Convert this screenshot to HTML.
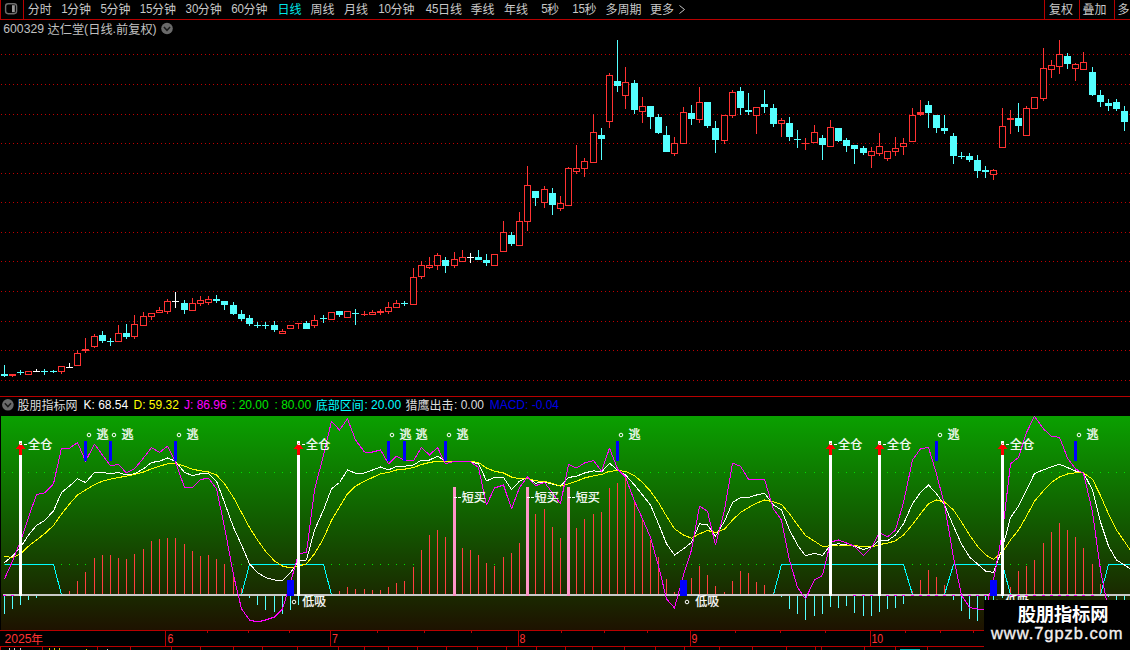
<!DOCTYPE html>
<html><head><meta charset="utf-8"><title>chart</title>
<style>html,body{margin:0;padding:0;background:#000}body{width:1130px;height:650px;overflow:hidden;position:relative}
svg{position:absolute;left:0;top:0;display:block}text{font-family:"Liberation Sans","Noto Sans CJK SC",sans-serif}</style></head>
<body><svg width="1130" height="650" viewBox="0 0 1130 650"><rect width="1130" height="650" fill="#000"/><g shape-rendering="crispEdges" stroke="#b80000" stroke-width="1" fill="none"><line x1="0" y1="19.5" x2="1130" y2="19.5"/><line x1="0.5" y1="0" x2="0.5" y2="20"/><line x1="23.5" y1="0" x2="23.5" y2="20"/><line x1="1044.5" y1="0" x2="1044.5" y2="20"/><line x1="1079.5" y1="0" x2="1079.5" y2="20"/><line x1="1114.5" y1="0" x2="1114.5" y2="20"/></g><rect x="5.6" y="3.7" width="11" height="10" rx="2.6" fill="none" stroke="#6e6e6e" stroke-width="1.4"/><rect x="12" y="5.2" width="2.8" height="7" fill="#9a9a9a"/><text x="27.80" y="14" font-size="12" fill="#c8c8c8">分时</text><text transform="translate(61.30 13.10) scale(0.96 1)" font-size="12" fill="#c8c8c8" xml:space="preserve">1</text><text x="67.11" y="14" font-size="12" fill="#c8c8c8">分钟</text><text transform="translate(100.60 13.10) scale(0.96 1)" font-size="12" fill="#c8c8c8" xml:space="preserve">5</text><text x="106.41" y="14" font-size="12" fill="#c8c8c8">分钟</text><text transform="translate(139.70 13.10) scale(0.96 1)" font-size="12" fill="#c8c8c8" xml:space="preserve">15</text><text x="151.91" y="14" font-size="12" fill="#c8c8c8">分钟</text><text transform="translate(185.50 13.10) scale(0.96 1)" font-size="12" fill="#c8c8c8" xml:space="preserve">30</text><text x="197.71" y="14" font-size="12" fill="#c8c8c8">分钟</text><text transform="translate(231.20 13.10) scale(0.96 1)" font-size="12" fill="#c8c8c8" xml:space="preserve">60</text><text x="243.41" y="14" font-size="12" fill="#c8c8c8">分钟</text><text x="277.60" y="14" font-size="12" fill="#00e6e6">日线</text><text x="310.60" y="14" font-size="12" fill="#c8c8c8">周线</text><text x="344.10" y="14" font-size="12" fill="#c8c8c8">月线</text><text transform="translate(378.20 13.10) scale(0.96 1)" font-size="12" fill="#c8c8c8" xml:space="preserve">10</text><text x="390.41" y="14" font-size="12" fill="#c8c8c8">分钟</text><text transform="translate(425.70 13.10) scale(0.96 1)" font-size="12" fill="#c8c8c8" xml:space="preserve">45</text><text x="437.91" y="14" font-size="12" fill="#c8c8c8">日线</text><text x="470.60" y="14" font-size="12" fill="#c8c8c8">季线</text><text x="504.10" y="14" font-size="12" fill="#c8c8c8">年线</text><text transform="translate(541.20 13.10) scale(0.96 1)" font-size="12" fill="#c8c8c8" xml:space="preserve">5</text><text x="547.01" y="14" font-size="12" fill="#c8c8c8">秒</text><text transform="translate(572.20 13.10) scale(0.96 1)" font-size="12" fill="#c8c8c8" xml:space="preserve">15</text><text x="584.41" y="14" font-size="12" fill="#c8c8c8">秒</text><text x="605.60" y="14" font-size="12" fill="#c8c8c8">多周期</text><text x="650.10" y="14" font-size="12" fill="#c8c8c8">更多</text><text x="1049.10" y="14" font-size="12" fill="#c8c8c8">复权</text><text x="1082.60" y="14" font-size="12" fill="#c8c8c8">叠加</text><text x="1117.60" y="14" font-size="12" fill="#c8c8c8">多</text><path d="M679.5 5.5 L684.5 9.5 L679.5 13.5" stroke="#c8c8c8" fill="none" stroke-width="1"/><text x="3.30" y="32.90" font-size="12.2" fill="#c0c0c0" xml:space="preserve">600329 </text><text x="47.60" y="33.9" font-size="12.2" fill="#c0c0c0">达仁堂</text><text x="84.00" y="32.90" font-size="12.2" fill="#c0c0c0" xml:space="preserve">(</text><text x="88.26" y="33.9" font-size="12.2" fill="#c0c0c0">日线</text><text x="112.46" y="32.90" font-size="12.2" fill="#c0c0c0" xml:space="preserve">.</text><text x="116.05" y="33.9" font-size="12.2" fill="#c0c0c0">前复权</text><text x="152.45" y="32.90" font-size="12.2" fill="#c0c0c0" xml:space="preserve">)</text><circle cx="167" cy="28.5" r="5.8" fill="#6a6a6a"/><path d="M163.9 27 L167 30.3 L170.1 27" stroke="#1a1a1a" stroke-width="1.5" fill="none"/><g shape-rendering="crispEdges" stroke="#c00000" stroke-width="1" stroke-dasharray="1 3"><line x1="1" y1="54.5" x2="1130" y2="54.5"/><line x1="1" y1="84.5" x2="1130" y2="84.5"/><line x1="1" y1="114.5" x2="1130" y2="114.5"/><line x1="1" y1="143.5" x2="1130" y2="143.5"/><line x1="1" y1="173.5" x2="1130" y2="173.5"/><line x1="1" y1="202.5" x2="1130" y2="202.5"/><line x1="1" y1="232.5" x2="1130" y2="232.5"/><line x1="1" y1="261.5" x2="1130" y2="261.5"/><line x1="1" y1="291.5" x2="1130" y2="291.5"/><line x1="1" y1="321.5" x2="1130" y2="321.5"/><line x1="1" y1="350.5" x2="1130" y2="350.5"/><line x1="1" y1="380.5" x2="1130" y2="380.5"/></g><g shape-rendering="crispEdges"><rect x="4" y="365" width="1" height="12" fill="#54ffff"/><rect x="1" y="374" width="7" height="2" fill="#54ffff"/><rect x="12" y="374" width="1" height="3" fill="#ff3232"/><rect x="9" y="374" width="7" height="2" fill="#ff3232"/><rect x="20" y="370" width="1" height="5" fill="#54ffff"/><rect x="17" y="372" width="7" height="1" fill="#54ffff"/><rect x="25.5" y="371.5" width="6" height="3" fill="#000" stroke="#ff3232" stroke-width="1"/><rect x="36" y="369" width="1" height="3" fill="#ffffff"/><rect x="33" y="371" width="7" height="1" fill="#ffffff"/><rect x="44" y="369" width="1" height="6" fill="#54ffff"/><rect x="41" y="371" width="7" height="1" fill="#54ffff"/><rect x="53" y="370" width="1" height="3" fill="#54ffff"/><rect x="50" y="371" width="7" height="1" fill="#54ffff"/><rect x="61" y="372" width="1" height="2" fill="#ff3232"/><rect x="58.5" y="366.5" width="6" height="5" fill="#000" stroke="#ff3232" stroke-width="1"/><rect x="69" y="363" width="1" height="5" fill="#ffffff"/><rect x="66" y="367" width="7" height="1" fill="#ffffff"/><rect x="77" y="350" width="1" height="3" fill="#ff3232"/><rect x="74.5" y="353.5" width="6" height="12" fill="#000" stroke="#ff3232" stroke-width="1"/><rect x="85" y="338" width="1" height="15" fill="#ff3232"/><rect x="82" y="349" width="7" height="2" fill="#ff3232"/><rect x="94" y="334" width="1" height="2" fill="#ff3232"/><rect x="94" y="347" width="1" height="1" fill="#ff3232"/><rect x="91.5" y="336.5" width="6" height="10" fill="#000" stroke="#ff3232" stroke-width="1"/><rect x="102" y="331" width="1" height="12" fill="#54ffff"/><rect x="99" y="335" width="7" height="6" fill="#54ffff"/><rect x="110" y="338" width="1" height="8" fill="#54ffff"/><rect x="107" y="341" width="7" height="1" fill="#54ffff"/><rect x="118" y="325" width="1" height="8" fill="#ff3232"/><rect x="115.5" y="333.5" width="6" height="8" fill="#000" stroke="#ff3232" stroke-width="1"/><rect x="126" y="324" width="1" height="15" fill="#54ffff"/><rect x="123" y="333" width="7" height="4" fill="#54ffff"/><rect x="134" y="315" width="1" height="9" fill="#ff3232"/><rect x="134" y="337" width="1" height="2" fill="#ff3232"/><rect x="131.5" y="324.5" width="6" height="12" fill="#000" stroke="#ff3232" stroke-width="1"/><rect x="143" y="312" width="1" height="4" fill="#ff3232"/><rect x="140.5" y="316.5" width="6" height="9" fill="#000" stroke="#ff3232" stroke-width="1"/><rect x="151" y="317" width="1" height="3" fill="#ff3232"/><rect x="148.5" y="313.5" width="6" height="3" fill="#000" stroke="#ff3232" stroke-width="1"/><rect x="159" y="307" width="1" height="3" fill="#ff3232"/><rect x="156.5" y="310.5" width="6" height="2" fill="#000" stroke="#ff3232" stroke-width="1"/><rect x="167" y="299" width="1" height="2" fill="#ff3232"/><rect x="167" y="312" width="1" height="2" fill="#ff3232"/><rect x="164.5" y="301.5" width="6" height="10" fill="#000" stroke="#ff3232" stroke-width="1"/><rect x="175" y="292" width="1" height="16" fill="#ffffff"/><rect x="172" y="301" width="7" height="1" fill="#ffffff"/><rect x="184" y="300" width="1" height="14" fill="#54ffff"/><rect x="181" y="303" width="7" height="7" fill="#54ffff"/><rect x="192" y="298" width="1" height="5" fill="#ff3232"/><rect x="189.5" y="303.5" width="6" height="7" fill="#000" stroke="#ff3232" stroke-width="1"/><rect x="200" y="296" width="1" height="4" fill="#ff3232"/><rect x="200" y="304" width="1" height="2" fill="#ff3232"/><rect x="197.5" y="300.5" width="6" height="3" fill="#000" stroke="#ff3232" stroke-width="1"/><rect x="208" y="296" width="1" height="3" fill="#ff3232"/><rect x="208" y="303" width="1" height="2" fill="#ff3232"/><rect x="205.5" y="299.5" width="6" height="3" fill="#000" stroke="#ff3232" stroke-width="1"/><rect x="216" y="295" width="1" height="8" fill="#54ffff"/><rect x="213" y="299" width="7" height="2" fill="#54ffff"/><rect x="224" y="301" width="1" height="9" fill="#54ffff"/><rect x="221" y="301" width="7" height="4" fill="#54ffff"/><rect x="233" y="302" width="1" height="13" fill="#54ffff"/><rect x="230" y="305" width="7" height="9" fill="#54ffff"/><rect x="241" y="310" width="1" height="11" fill="#54ffff"/><rect x="238" y="314" width="7" height="5" fill="#54ffff"/><rect x="249" y="315" width="1" height="11" fill="#54ffff"/><rect x="246" y="318" width="7" height="6" fill="#54ffff"/><rect x="257" y="322" width="1" height="6" fill="#54ffff"/><rect x="254" y="325" width="7" height="1" fill="#54ffff"/><rect x="265" y="322" width="1" height="7" fill="#54ffff"/><rect x="262" y="325" width="7" height="1" fill="#54ffff"/><rect x="274" y="321" width="1" height="11" fill="#54ffff"/><rect x="271" y="325" width="7" height="5" fill="#54ffff"/><rect x="282" y="329" width="1" height="2" fill="#ff3232"/><rect x="279.5" y="331.5" width="6" height="2" fill="#000" stroke="#ff3232" stroke-width="1"/><rect x="287.5" y="325.5" width="6" height="3" fill="#000" stroke="#ff3232" stroke-width="1"/><rect x="298" y="323" width="1" height="6" fill="#ff3232"/><rect x="295" y="323" width="7" height="1" fill="#ff3232"/><rect x="306" y="321" width="1" height="8" fill="#54ffff"/><rect x="303" y="323" width="7" height="6" fill="#54ffff"/><rect x="314" y="315" width="1" height="5" fill="#ff3232"/><rect x="314" y="326" width="1" height="2" fill="#ff3232"/><rect x="311.5" y="320.5" width="6" height="5" fill="#000" stroke="#ff3232" stroke-width="1"/><rect x="323" y="315" width="1" height="8" fill="#54ffff"/><rect x="320" y="318" width="7" height="1" fill="#54ffff"/><rect x="328.5" y="312.5" width="6" height="7" fill="#000" stroke="#ff3232" stroke-width="1"/><rect x="339" y="311" width="1" height="6" fill="#54ffff"/><rect x="336" y="311" width="7" height="4" fill="#54ffff"/><rect x="344.5" y="311.5" width="6" height="6" fill="#000" stroke="#ff3232" stroke-width="1"/><rect x="355" y="309" width="1" height="16" fill="#54ffff"/><rect x="352" y="313" width="7" height="1" fill="#54ffff"/><rect x="364" y="311" width="1" height="5" fill="#ff3232"/><rect x="361" y="314" width="7" height="1" fill="#ff3232"/><rect x="372" y="310" width="1" height="2" fill="#ff3232"/><rect x="369.5" y="312.5" width="6" height="2" fill="#000" stroke="#ff3232" stroke-width="1"/><rect x="380" y="309" width="1" height="6" fill="#ff3232"/><rect x="377" y="311" width="7" height="2" fill="#ff3232"/><rect x="388" y="302" width="1" height="5" fill="#ff3232"/><rect x="388" y="312" width="1" height="2" fill="#ff3232"/><rect x="385.5" y="307.5" width="6" height="4" fill="#000" stroke="#ff3232" stroke-width="1"/><rect x="396" y="300" width="1" height="3" fill="#ff3232"/><rect x="393.5" y="303.5" width="6" height="4" fill="#000" stroke="#ff3232" stroke-width="1"/><rect x="404" y="301" width="1" height="5" fill="#54ffff"/><rect x="401" y="303" width="7" height="1" fill="#54ffff"/><rect x="413" y="268" width="1" height="9" fill="#ff3232"/><rect x="410.5" y="277.5" width="6" height="27" fill="#000" stroke="#ff3232" stroke-width="1"/><rect x="421" y="261" width="1" height="4" fill="#ff3232"/><rect x="421" y="277" width="1" height="2" fill="#ff3232"/><rect x="418.5" y="265.5" width="6" height="11" fill="#000" stroke="#ff3232" stroke-width="1"/><rect x="429" y="257" width="1" height="8" fill="#ff3232"/><rect x="429" y="268" width="1" height="1" fill="#ff3232"/><rect x="426.5" y="265.5" width="6" height="2" fill="#000" stroke="#ff3232" stroke-width="1"/><rect x="437" y="253" width="1" height="2" fill="#ff3232"/><rect x="437" y="266" width="1" height="4" fill="#ff3232"/><rect x="434.5" y="255.5" width="6" height="10" fill="#000" stroke="#ff3232" stroke-width="1"/><rect x="445" y="257" width="1" height="16" fill="#54ffff"/><rect x="442" y="260" width="7" height="6" fill="#54ffff"/><rect x="454" y="252" width="1" height="7" fill="#ff3232"/><rect x="454" y="266" width="1" height="2" fill="#ff3232"/><rect x="451.5" y="259.5" width="6" height="6" fill="#000" stroke="#ff3232" stroke-width="1"/><rect x="462" y="250" width="1" height="7" fill="#ff3232"/><rect x="459.5" y="257.5" width="6" height="4" fill="#000" stroke="#ff3232" stroke-width="1"/><rect x="470" y="253" width="1" height="10" fill="#ffffff"/><rect x="467" y="257" width="7" height="1" fill="#ffffff"/><rect x="478" y="250" width="1" height="10" fill="#54ffff"/><rect x="475" y="257" width="7" height="3" fill="#54ffff"/><rect x="486" y="254" width="1" height="12" fill="#54ffff"/><rect x="483" y="260" width="7" height="3" fill="#54ffff"/><rect x="491.5" y="254.5" width="6" height="11" fill="#000" stroke="#ff3232" stroke-width="1"/><rect x="503" y="221" width="1" height="11" fill="#ff3232"/><rect x="500.5" y="232.5" width="6" height="19" fill="#000" stroke="#ff3232" stroke-width="1"/><rect x="511" y="232" width="1" height="14" fill="#54ffff"/><rect x="508" y="235" width="7" height="9" fill="#54ffff"/><rect x="519" y="212" width="1" height="9" fill="#ff3232"/><rect x="516.5" y="221.5" width="6" height="24" fill="#000" stroke="#ff3232" stroke-width="1"/><rect x="527" y="166" width="1" height="19" fill="#ff3232"/><rect x="527" y="222" width="1" height="9" fill="#ff3232"/><rect x="524.5" y="185.5" width="6" height="36" fill="#000" stroke="#ff3232" stroke-width="1"/><rect x="535" y="191" width="1" height="15" fill="#54ffff"/><rect x="532" y="191" width="7" height="7" fill="#54ffff"/><rect x="544" y="186" width="1" height="3" fill="#ff3232"/><rect x="544" y="203" width="1" height="5" fill="#ff3232"/><rect x="541.5" y="189.5" width="6" height="13" fill="#000" stroke="#ff3232" stroke-width="1"/><rect x="552" y="188" width="1" height="27" fill="#54ffff"/><rect x="549" y="193" width="7" height="12" fill="#54ffff"/><rect x="560" y="196" width="1" height="7" fill="#ff3232"/><rect x="560" y="209" width="1" height="2" fill="#ff3232"/><rect x="557.5" y="203.5" width="6" height="5" fill="#000" stroke="#ff3232" stroke-width="1"/><rect x="568" y="167" width="1" height="1" fill="#ff3232"/><rect x="565.5" y="168.5" width="6" height="37" fill="#000" stroke="#ff3232" stroke-width="1"/><rect x="576" y="145" width="1" height="23" fill="#ff3232"/><rect x="576" y="172" width="1" height="2" fill="#ff3232"/><rect x="573.5" y="168.5" width="6" height="3" fill="#000" stroke="#ff3232" stroke-width="1"/><rect x="584" y="158" width="1" height="3" fill="#ff3232"/><rect x="584" y="169" width="1" height="8" fill="#ff3232"/><rect x="581.5" y="161.5" width="6" height="7" fill="#000" stroke="#ff3232" stroke-width="1"/><rect x="593" y="114" width="1" height="18" fill="#ff3232"/><rect x="590.5" y="132.5" width="6" height="30" fill="#000" stroke="#ff3232" stroke-width="1"/><rect x="601" y="128" width="1" height="32" fill="#54ffff"/><rect x="598" y="135" width="7" height="4" fill="#54ffff"/><rect x="609" y="73" width="1" height="2" fill="#ff3232"/><rect x="609" y="122" width="1" height="6" fill="#ff3232"/><rect x="606.5" y="75.5" width="6" height="46" fill="#000" stroke="#ff3232" stroke-width="1"/><rect x="617" y="40" width="1" height="52" fill="#54ffff"/><rect x="614" y="81" width="7" height="5" fill="#54ffff"/><rect x="625" y="67" width="1" height="15" fill="#ff3232"/><rect x="625" y="96" width="1" height="13" fill="#ff3232"/><rect x="622.5" y="82.5" width="6" height="13" fill="#000" stroke="#ff3232" stroke-width="1"/><rect x="634" y="80" width="1" height="34" fill="#54ffff"/><rect x="631" y="83" width="7" height="27" fill="#54ffff"/><rect x="642" y="97" width="1" height="9" fill="#ff3232"/><rect x="642" y="112" width="1" height="11" fill="#ff3232"/><rect x="639.5" y="106.5" width="6" height="5" fill="#000" stroke="#ff3232" stroke-width="1"/><rect x="650" y="106" width="1" height="23" fill="#54ffff"/><rect x="647" y="106" width="7" height="11" fill="#54ffff"/><rect x="658" y="114" width="1" height="20" fill="#54ffff"/><rect x="655" y="117" width="7" height="16" fill="#54ffff"/><rect x="666" y="126" width="1" height="26" fill="#54ffff"/><rect x="663" y="135" width="7" height="17" fill="#54ffff"/><rect x="674" y="137" width="1" height="6" fill="#ff3232"/><rect x="674" y="154" width="1" height="2" fill="#ff3232"/><rect x="671.5" y="143.5" width="6" height="10" fill="#000" stroke="#ff3232" stroke-width="1"/><rect x="683" y="107" width="1" height="5" fill="#ff3232"/><rect x="680.5" y="112.5" width="6" height="31" fill="#000" stroke="#ff3232" stroke-width="1"/><rect x="691" y="105" width="1" height="20" fill="#54ffff"/><rect x="688" y="113" width="7" height="6" fill="#54ffff"/><rect x="699" y="87" width="1" height="15" fill="#ff3232"/><rect x="699" y="120" width="1" height="3" fill="#ff3232"/><rect x="696.5" y="102.5" width="6" height="17" fill="#000" stroke="#ff3232" stroke-width="1"/><rect x="707" y="102" width="1" height="26" fill="#54ffff"/><rect x="704" y="102" width="7" height="24" fill="#54ffff"/><rect x="715" y="121" width="1" height="32" fill="#54ffff"/><rect x="712" y="128" width="7" height="12" fill="#54ffff"/><rect x="724" y="141" width="1" height="3" fill="#ff3232"/><rect x="721.5" y="115.5" width="6" height="25" fill="#000" stroke="#ff3232" stroke-width="1"/><rect x="732" y="90" width="1" height="2" fill="#ff3232"/><rect x="732" y="116" width="1" height="2" fill="#ff3232"/><rect x="729.5" y="92.5" width="6" height="23" fill="#000" stroke="#ff3232" stroke-width="1"/><rect x="740" y="87" width="1" height="28" fill="#54ffff"/><rect x="737" y="91" width="7" height="17" fill="#54ffff"/><rect x="748" y="93" width="1" height="22" fill="#54ffff"/><rect x="745" y="110" width="7" height="2" fill="#54ffff"/><rect x="756" y="116" width="1" height="18" fill="#ff3232"/><rect x="753.5" y="107.5" width="6" height="8" fill="#000" stroke="#ff3232" stroke-width="1"/><rect x="764" y="90" width="1" height="23" fill="#54ffff"/><rect x="761" y="104" width="7" height="3" fill="#54ffff"/><rect x="773" y="104" width="1" height="23" fill="#54ffff"/><rect x="770" y="108" width="7" height="16" fill="#54ffff"/><rect x="781" y="118" width="1" height="2" fill="#ff3232"/><rect x="781" y="124" width="1" height="13" fill="#ff3232"/><rect x="778.5" y="120.5" width="6" height="3" fill="#000" stroke="#ff3232" stroke-width="1"/><rect x="789" y="117" width="1" height="24" fill="#54ffff"/><rect x="786" y="123" width="7" height="14" fill="#54ffff"/><rect x="797" y="130" width="1" height="18" fill="#54ffff"/><rect x="794" y="139" width="7" height="1" fill="#54ffff"/><rect x="805" y="138" width="1" height="12" fill="#ff3232"/><rect x="802" y="143" width="7" height="1" fill="#ff3232"/><rect x="814" y="125" width="1" height="7" fill="#ff3232"/><rect x="811.5" y="132.5" width="6" height="10" fill="#000" stroke="#ff3232" stroke-width="1"/><rect x="822" y="135" width="1" height="25" fill="#54ffff"/><rect x="819" y="138" width="7" height="7" fill="#54ffff"/><rect x="830" y="120" width="1" height="7" fill="#ff3232"/><rect x="827.5" y="127.5" width="6" height="19" fill="#000" stroke="#ff3232" stroke-width="1"/><rect x="838" y="128" width="1" height="14" fill="#54ffff"/><rect x="835" y="128" width="7" height="13" fill="#54ffff"/><rect x="846" y="138" width="1" height="14" fill="#54ffff"/><rect x="843" y="140" width="7" height="6" fill="#54ffff"/><rect x="854" y="145" width="1" height="19" fill="#54ffff"/><rect x="851" y="145" width="7" height="4" fill="#54ffff"/><rect x="863" y="146" width="1" height="9" fill="#54ffff"/><rect x="860" y="148" width="7" height="5" fill="#54ffff"/><rect x="871" y="147" width="1" height="4" fill="#ff3232"/><rect x="871" y="156" width="1" height="12" fill="#ff3232"/><rect x="868.5" y="151.5" width="6" height="4" fill="#000" stroke="#ff3232" stroke-width="1"/><rect x="879" y="133" width="1" height="13" fill="#ff3232"/><rect x="879" y="154" width="1" height="2" fill="#ff3232"/><rect x="876.5" y="146.5" width="6" height="7" fill="#000" stroke="#ff3232" stroke-width="1"/><rect x="887" y="159" width="1" height="2" fill="#ff3232"/><rect x="884.5" y="151.5" width="6" height="7" fill="#000" stroke="#ff3232" stroke-width="1"/><rect x="895" y="137" width="1" height="11" fill="#ff3232"/><rect x="895" y="152" width="1" height="4" fill="#ff3232"/><rect x="892.5" y="148.5" width="6" height="3" fill="#000" stroke="#ff3232" stroke-width="1"/><rect x="903" y="138" width="1" height="5" fill="#ff3232"/><rect x="903" y="147" width="1" height="8" fill="#ff3232"/><rect x="900.5" y="143.5" width="6" height="3" fill="#000" stroke="#ff3232" stroke-width="1"/><rect x="912" y="108" width="1" height="7" fill="#ff3232"/><rect x="909.5" y="115.5" width="6" height="26" fill="#000" stroke="#ff3232" stroke-width="1"/><rect x="920" y="100" width="1" height="16" fill="#ff3232"/><rect x="917" y="112" width="7" height="3" fill="#ff3232"/><rect x="928" y="101" width="1" height="27" fill="#54ffff"/><rect x="925" y="105" width="7" height="8" fill="#54ffff"/><rect x="936" y="115" width="1" height="18" fill="#54ffff"/><rect x="933" y="115" width="7" height="13" fill="#54ffff"/><rect x="944" y="115" width="1" height="19" fill="#54ffff"/><rect x="941" y="128" width="7" height="3" fill="#54ffff"/><rect x="953" y="133" width="1" height="31" fill="#54ffff"/><rect x="950" y="136" width="7" height="20" fill="#54ffff"/><rect x="961" y="152" width="1" height="7" fill="#54ffff"/><rect x="958" y="156" width="7" height="1" fill="#54ffff"/><rect x="969" y="153" width="1" height="9" fill="#54ffff"/><rect x="966" y="156" width="7" height="4" fill="#54ffff"/><rect x="977" y="155" width="1" height="23" fill="#54ffff"/><rect x="974" y="160" width="7" height="11" fill="#54ffff"/><rect x="985" y="166" width="1" height="12" fill="#54ffff"/><rect x="982" y="170" width="7" height="2" fill="#54ffff"/><rect x="993" y="169" width="1" height="1" fill="#ff3232"/><rect x="993" y="175" width="1" height="5" fill="#ff3232"/><rect x="990.5" y="170.5" width="6" height="4" fill="#000" stroke="#ff3232" stroke-width="1"/><rect x="1002" y="108" width="1" height="18" fill="#ff3232"/><rect x="999.5" y="126.5" width="6" height="21" fill="#000" stroke="#ff3232" stroke-width="1"/><rect x="1010" y="110" width="1" height="24" fill="#ff3232"/><rect x="1007" y="118" width="7" height="2" fill="#ff3232"/><rect x="1018" y="103" width="1" height="29" fill="#54ffff"/><rect x="1015" y="118" width="7" height="8" fill="#54ffff"/><rect x="1026" y="106" width="1" height="2" fill="#ff3232"/><rect x="1023.5" y="108.5" width="6" height="27" fill="#000" stroke="#ff3232" stroke-width="1"/><rect x="1031.5" y="97.5" width="6" height="11" fill="#000" stroke="#ff3232" stroke-width="1"/><rect x="1043" y="48" width="1" height="20" fill="#ff3232"/><rect x="1043" y="99" width="1" height="2" fill="#ff3232"/><rect x="1040.5" y="68.5" width="6" height="30" fill="#000" stroke="#ff3232" stroke-width="1"/><rect x="1051" y="60" width="1" height="5" fill="#ff3232"/><rect x="1051" y="70" width="1" height="8" fill="#ff3232"/><rect x="1048.5" y="65.5" width="6" height="4" fill="#000" stroke="#ff3232" stroke-width="1"/><rect x="1059" y="40" width="1" height="14" fill="#ff3232"/><rect x="1059" y="67" width="1" height="7" fill="#ff3232"/><rect x="1056.5" y="54.5" width="6" height="12" fill="#000" stroke="#ff3232" stroke-width="1"/><rect x="1067" y="53" width="1" height="16" fill="#54ffff"/><rect x="1064" y="56" width="7" height="8" fill="#54ffff"/><rect x="1075" y="63" width="1" height="1" fill="#ff3232"/><rect x="1075" y="69" width="1" height="12" fill="#ff3232"/><rect x="1072.5" y="64.5" width="6" height="4" fill="#000" stroke="#ff3232" stroke-width="1"/><rect x="1083" y="52" width="1" height="10" fill="#ff3232"/><rect x="1080.5" y="62.5" width="6" height="7" fill="#000" stroke="#ff3232" stroke-width="1"/><rect x="1092" y="67" width="1" height="29" fill="#54ffff"/><rect x="1089" y="72" width="7" height="23" fill="#54ffff"/><rect x="1100" y="90" width="1" height="17" fill="#54ffff"/><rect x="1097" y="95" width="7" height="7" fill="#54ffff"/><rect x="1108" y="99" width="1" height="12" fill="#54ffff"/><rect x="1105" y="103" width="7" height="3" fill="#54ffff"/><rect x="1116" y="99" width="1" height="12" fill="#54ffff"/><rect x="1113" y="102" width="7" height="7" fill="#54ffff"/><rect x="1124" y="106" width="1" height="25" fill="#54ffff"/><rect x="1121" y="111" width="7" height="11" fill="#54ffff"/></g><rect x="0" y="396" width="1130" height="1" fill="#b80000" shape-rendering="crispEdges"/><defs><linearGradient id="pg" x1="0" y1="0" x2="0" y2="1">
<stop offset="0" stop-color="#0aa000"/>
<stop offset="0.5" stop-color="#125a00"/>
<stop offset="1" stop-color="#1e1200"/></linearGradient></defs><rect x="1" y="416" width="1129" height="214" fill="url(#pg)"/><circle cx="7.9" cy="404.8" r="5.8" fill="#6a6a6a"/><path d="M4.8 403.3 L7.9 406.6 L11 403.3" stroke="#1a1a1a" stroke-width="1.5" fill="none"/><text x="17.40" y="409.6" font-size="12" fill="#dcdcdc">股朋指标网</text><text x="83.50" y="409.10" font-size="12" fill="#ffffff" xml:space="preserve">K: 68.54</text><text x="133.50" y="409.10" font-size="12" fill="#ffff00" xml:space="preserve">D: 59.32</text><text x="184.00" y="409.10" font-size="12" fill="#ff00ff" xml:space="preserve">J: 86.96</text><text x="232.00" y="409.10" font-size="12" fill="#00e600" xml:space="preserve">: 20.00</text><text x="274.50" y="409.10" font-size="12" fill="#00e600" xml:space="preserve">: 80.00</text><text x="315.80" y="409.6" font-size="12" fill="#00ffff">底部区间</text><text x="364.40" y="409.10" font-size="12" fill="#00ffff" xml:space="preserve">: 20.00</text><text x="405.40" y="409.6" font-size="12" fill="#dcdcdc">猎鹰出击</text><text x="454.00" y="409.10" font-size="12" fill="#dcdcdc" xml:space="preserve">: 0.00</text><text x="489.70" y="409.10" font-size="12" fill="#0000e6" xml:space="preserve">MACD: -0.04</text><g shape-rendering="crispEdges" fill="#00e000"><rect x="4" y="472" width="1" height="1"/><rect x="4" y="564" width="1" height="1"/><rect x="12" y="472" width="1" height="1"/><rect x="12" y="564" width="1" height="1"/><rect x="20" y="472" width="1" height="1"/><rect x="20" y="564" width="1" height="1"/><rect x="28" y="472" width="1" height="1"/><rect x="28" y="564" width="1" height="1"/><rect x="36" y="472" width="1" height="1"/><rect x="36" y="564" width="1" height="1"/><rect x="44" y="472" width="1" height="1"/><rect x="44" y="564" width="1" height="1"/><rect x="53" y="472" width="1" height="1"/><rect x="53" y="564" width="1" height="1"/><rect x="61" y="472" width="1" height="1"/><rect x="61" y="564" width="1" height="1"/><rect x="69" y="472" width="1" height="1"/><rect x="69" y="564" width="1" height="1"/><rect x="77" y="472" width="1" height="1"/><rect x="77" y="564" width="1" height="1"/><rect x="85" y="472" width="1" height="1"/><rect x="85" y="564" width="1" height="1"/><rect x="94" y="472" width="1" height="1"/><rect x="94" y="564" width="1" height="1"/><rect x="102" y="472" width="1" height="1"/><rect x="102" y="564" width="1" height="1"/><rect x="110" y="472" width="1" height="1"/><rect x="110" y="564" width="1" height="1"/><rect x="118" y="472" width="1" height="1"/><rect x="118" y="564" width="1" height="1"/><rect x="126" y="472" width="1" height="1"/><rect x="126" y="564" width="1" height="1"/><rect x="134" y="472" width="1" height="1"/><rect x="134" y="564" width="1" height="1"/><rect x="143" y="472" width="1" height="1"/><rect x="143" y="564" width="1" height="1"/><rect x="151" y="472" width="1" height="1"/><rect x="151" y="564" width="1" height="1"/><rect x="159" y="472" width="1" height="1"/><rect x="159" y="564" width="1" height="1"/><rect x="167" y="472" width="1" height="1"/><rect x="167" y="564" width="1" height="1"/><rect x="175" y="472" width="1" height="1"/><rect x="175" y="564" width="1" height="1"/><rect x="184" y="472" width="1" height="1"/><rect x="184" y="564" width="1" height="1"/><rect x="192" y="472" width="1" height="1"/><rect x="192" y="564" width="1" height="1"/><rect x="200" y="472" width="1" height="1"/><rect x="200" y="564" width="1" height="1"/><rect x="208" y="472" width="1" height="1"/><rect x="208" y="564" width="1" height="1"/><rect x="216" y="472" width="1" height="1"/><rect x="216" y="564" width="1" height="1"/><rect x="224" y="472" width="1" height="1"/><rect x="224" y="564" width="1" height="1"/><rect x="233" y="472" width="1" height="1"/><rect x="233" y="564" width="1" height="1"/><rect x="241" y="472" width="1" height="1"/><rect x="241" y="564" width="1" height="1"/><rect x="249" y="472" width="1" height="1"/><rect x="249" y="564" width="1" height="1"/><rect x="257" y="472" width="1" height="1"/><rect x="257" y="564" width="1" height="1"/><rect x="265" y="472" width="1" height="1"/><rect x="265" y="564" width="1" height="1"/><rect x="274" y="472" width="1" height="1"/><rect x="274" y="564" width="1" height="1"/><rect x="282" y="472" width="1" height="1"/><rect x="282" y="564" width="1" height="1"/><rect x="290" y="472" width="1" height="1"/><rect x="290" y="564" width="1" height="1"/><rect x="298" y="472" width="1" height="1"/><rect x="298" y="564" width="1" height="1"/><rect x="306" y="472" width="1" height="1"/><rect x="306" y="564" width="1" height="1"/><rect x="314" y="472" width="1" height="1"/><rect x="314" y="564" width="1" height="1"/><rect x="323" y="472" width="1" height="1"/><rect x="323" y="564" width="1" height="1"/><rect x="331" y="472" width="1" height="1"/><rect x="331" y="564" width="1" height="1"/><rect x="339" y="472" width="1" height="1"/><rect x="339" y="564" width="1" height="1"/><rect x="347" y="472" width="1" height="1"/><rect x="347" y="564" width="1" height="1"/><rect x="355" y="472" width="1" height="1"/><rect x="355" y="564" width="1" height="1"/><rect x="364" y="472" width="1" height="1"/><rect x="364" y="564" width="1" height="1"/><rect x="372" y="472" width="1" height="1"/><rect x="372" y="564" width="1" height="1"/><rect x="380" y="472" width="1" height="1"/><rect x="380" y="564" width="1" height="1"/><rect x="388" y="472" width="1" height="1"/><rect x="388" y="564" width="1" height="1"/><rect x="396" y="472" width="1" height="1"/><rect x="396" y="564" width="1" height="1"/><rect x="404" y="472" width="1" height="1"/><rect x="404" y="564" width="1" height="1"/><rect x="413" y="472" width="1" height="1"/><rect x="413" y="564" width="1" height="1"/><rect x="421" y="472" width="1" height="1"/><rect x="421" y="564" width="1" height="1"/><rect x="429" y="472" width="1" height="1"/><rect x="429" y="564" width="1" height="1"/><rect x="437" y="472" width="1" height="1"/><rect x="437" y="564" width="1" height="1"/><rect x="445" y="472" width="1" height="1"/><rect x="445" y="564" width="1" height="1"/><rect x="454" y="472" width="1" height="1"/><rect x="454" y="564" width="1" height="1"/><rect x="462" y="472" width="1" height="1"/><rect x="462" y="564" width="1" height="1"/><rect x="470" y="472" width="1" height="1"/><rect x="470" y="564" width="1" height="1"/><rect x="478" y="472" width="1" height="1"/><rect x="478" y="564" width="1" height="1"/><rect x="486" y="472" width="1" height="1"/><rect x="486" y="564" width="1" height="1"/><rect x="494" y="472" width="1" height="1"/><rect x="494" y="564" width="1" height="1"/><rect x="503" y="472" width="1" height="1"/><rect x="503" y="564" width="1" height="1"/><rect x="511" y="472" width="1" height="1"/><rect x="511" y="564" width="1" height="1"/><rect x="519" y="472" width="1" height="1"/><rect x="519" y="564" width="1" height="1"/><rect x="527" y="472" width="1" height="1"/><rect x="527" y="564" width="1" height="1"/><rect x="535" y="472" width="1" height="1"/><rect x="535" y="564" width="1" height="1"/><rect x="544" y="472" width="1" height="1"/><rect x="544" y="564" width="1" height="1"/><rect x="552" y="472" width="1" height="1"/><rect x="552" y="564" width="1" height="1"/><rect x="560" y="472" width="1" height="1"/><rect x="560" y="564" width="1" height="1"/><rect x="568" y="472" width="1" height="1"/><rect x="568" y="564" width="1" height="1"/><rect x="576" y="472" width="1" height="1"/><rect x="576" y="564" width="1" height="1"/><rect x="584" y="472" width="1" height="1"/><rect x="584" y="564" width="1" height="1"/><rect x="593" y="472" width="1" height="1"/><rect x="593" y="564" width="1" height="1"/><rect x="601" y="472" width="1" height="1"/><rect x="601" y="564" width="1" height="1"/><rect x="609" y="472" width="1" height="1"/><rect x="609" y="564" width="1" height="1"/><rect x="617" y="472" width="1" height="1"/><rect x="617" y="564" width="1" height="1"/><rect x="625" y="472" width="1" height="1"/><rect x="625" y="564" width="1" height="1"/><rect x="634" y="472" width="1" height="1"/><rect x="634" y="564" width="1" height="1"/><rect x="642" y="472" width="1" height="1"/><rect x="642" y="564" width="1" height="1"/><rect x="650" y="472" width="1" height="1"/><rect x="650" y="564" width="1" height="1"/><rect x="658" y="472" width="1" height="1"/><rect x="658" y="564" width="1" height="1"/><rect x="666" y="472" width="1" height="1"/><rect x="666" y="564" width="1" height="1"/><rect x="674" y="472" width="1" height="1"/><rect x="674" y="564" width="1" height="1"/><rect x="683" y="472" width="1" height="1"/><rect x="683" y="564" width="1" height="1"/><rect x="691" y="472" width="1" height="1"/><rect x="691" y="564" width="1" height="1"/><rect x="699" y="472" width="1" height="1"/><rect x="699" y="564" width="1" height="1"/><rect x="707" y="472" width="1" height="1"/><rect x="707" y="564" width="1" height="1"/><rect x="715" y="472" width="1" height="1"/><rect x="715" y="564" width="1" height="1"/><rect x="724" y="472" width="1" height="1"/><rect x="724" y="564" width="1" height="1"/><rect x="732" y="472" width="1" height="1"/><rect x="732" y="564" width="1" height="1"/><rect x="740" y="472" width="1" height="1"/><rect x="740" y="564" width="1" height="1"/><rect x="748" y="472" width="1" height="1"/><rect x="748" y="564" width="1" height="1"/><rect x="756" y="472" width="1" height="1"/><rect x="756" y="564" width="1" height="1"/><rect x="764" y="472" width="1" height="1"/><rect x="764" y="564" width="1" height="1"/><rect x="773" y="472" width="1" height="1"/><rect x="773" y="564" width="1" height="1"/><rect x="781" y="472" width="1" height="1"/><rect x="781" y="564" width="1" height="1"/><rect x="789" y="472" width="1" height="1"/><rect x="789" y="564" width="1" height="1"/><rect x="797" y="472" width="1" height="1"/><rect x="797" y="564" width="1" height="1"/><rect x="805" y="472" width="1" height="1"/><rect x="805" y="564" width="1" height="1"/><rect x="814" y="472" width="1" height="1"/><rect x="814" y="564" width="1" height="1"/><rect x="822" y="472" width="1" height="1"/><rect x="822" y="564" width="1" height="1"/><rect x="830" y="472" width="1" height="1"/><rect x="830" y="564" width="1" height="1"/><rect x="838" y="472" width="1" height="1"/><rect x="838" y="564" width="1" height="1"/><rect x="846" y="472" width="1" height="1"/><rect x="846" y="564" width="1" height="1"/><rect x="854" y="472" width="1" height="1"/><rect x="854" y="564" width="1" height="1"/><rect x="863" y="472" width="1" height="1"/><rect x="863" y="564" width="1" height="1"/><rect x="871" y="472" width="1" height="1"/><rect x="871" y="564" width="1" height="1"/><rect x="879" y="472" width="1" height="1"/><rect x="879" y="564" width="1" height="1"/><rect x="887" y="472" width="1" height="1"/><rect x="887" y="564" width="1" height="1"/><rect x="895" y="472" width="1" height="1"/><rect x="895" y="564" width="1" height="1"/><rect x="903" y="472" width="1" height="1"/><rect x="903" y="564" width="1" height="1"/><rect x="912" y="472" width="1" height="1"/><rect x="912" y="564" width="1" height="1"/><rect x="920" y="472" width="1" height="1"/><rect x="920" y="564" width="1" height="1"/><rect x="928" y="472" width="1" height="1"/><rect x="928" y="564" width="1" height="1"/><rect x="936" y="472" width="1" height="1"/><rect x="936" y="564" width="1" height="1"/><rect x="944" y="472" width="1" height="1"/><rect x="944" y="564" width="1" height="1"/><rect x="953" y="472" width="1" height="1"/><rect x="953" y="564" width="1" height="1"/><rect x="961" y="472" width="1" height="1"/><rect x="961" y="564" width="1" height="1"/><rect x="969" y="472" width="1" height="1"/><rect x="969" y="564" width="1" height="1"/><rect x="977" y="472" width="1" height="1"/><rect x="977" y="564" width="1" height="1"/><rect x="985" y="472" width="1" height="1"/><rect x="985" y="564" width="1" height="1"/><rect x="993" y="472" width="1" height="1"/><rect x="993" y="564" width="1" height="1"/><rect x="1002" y="472" width="1" height="1"/><rect x="1002" y="564" width="1" height="1"/><rect x="1010" y="472" width="1" height="1"/><rect x="1010" y="564" width="1" height="1"/><rect x="1018" y="472" width="1" height="1"/><rect x="1018" y="564" width="1" height="1"/><rect x="1026" y="472" width="1" height="1"/><rect x="1026" y="564" width="1" height="1"/><rect x="1034" y="472" width="1" height="1"/><rect x="1034" y="564" width="1" height="1"/><rect x="1043" y="472" width="1" height="1"/><rect x="1043" y="564" width="1" height="1"/><rect x="1051" y="472" width="1" height="1"/><rect x="1051" y="564" width="1" height="1"/><rect x="1059" y="472" width="1" height="1"/><rect x="1059" y="564" width="1" height="1"/><rect x="1067" y="472" width="1" height="1"/><rect x="1067" y="564" width="1" height="1"/><rect x="1075" y="472" width="1" height="1"/><rect x="1075" y="564" width="1" height="1"/><rect x="1083" y="472" width="1" height="1"/><rect x="1083" y="564" width="1" height="1"/><rect x="1092" y="472" width="1" height="1"/><rect x="1092" y="564" width="1" height="1"/><rect x="1100" y="472" width="1" height="1"/><rect x="1100" y="564" width="1" height="1"/><rect x="1108" y="472" width="1" height="1"/><rect x="1108" y="564" width="1" height="1"/><rect x="1116" y="472" width="1" height="1"/><rect x="1116" y="564" width="1" height="1"/><rect x="1124" y="472" width="1" height="1"/><rect x="1124" y="564" width="1" height="1"/></g><g shape-rendering="crispEdges"><rect x="4" y="596" width="1" height="18" fill="#54ffff"/><rect x="12" y="596" width="1" height="13" fill="#54ffff"/><rect x="20" y="596" width="1" height="9" fill="#54ffff"/><rect x="28" y="596" width="1" height="4" fill="#54ffff"/><rect x="36" y="596" width="1" height="2" fill="#54ffff"/><rect x="44" y="596" width="1" height="0" fill="#54ffff"/><rect x="69" y="591" width="1" height="4" fill="#ff4040"/><rect x="77" y="581" width="1" height="14" fill="#ff4040"/><rect x="85" y="572" width="1" height="23" fill="#ff4040"/><rect x="94" y="558" width="1" height="37" fill="#ff4040"/><rect x="102" y="555" width="1" height="40" fill="#ff4040"/><rect x="110" y="555" width="1" height="40" fill="#ff4040"/><rect x="118" y="558" width="1" height="37" fill="#ff4040"/><rect x="126" y="559" width="1" height="36" fill="#ff4040"/><rect x="134" y="554" width="1" height="41" fill="#ff4040"/><rect x="143" y="549" width="1" height="46" fill="#ff4040"/><rect x="151" y="541" width="1" height="54" fill="#ff4040"/><rect x="159" y="539" width="1" height="56" fill="#ff4040"/><rect x="167" y="538" width="1" height="57" fill="#ff4040"/><rect x="175" y="538" width="1" height="57" fill="#ff4040"/><rect x="184" y="544" width="1" height="51" fill="#ff4040"/><rect x="192" y="551" width="1" height="44" fill="#ff4040"/><rect x="200" y="556" width="1" height="39" fill="#ff4040"/><rect x="208" y="555" width="1" height="40" fill="#ff4040"/><rect x="216" y="559" width="1" height="36" fill="#ff4040"/><rect x="224" y="564" width="1" height="31" fill="#ff4040"/><rect x="233" y="577" width="1" height="18" fill="#ff4040"/><rect x="241" y="588" width="1" height="7" fill="#ff4040"/><rect x="249" y="596" width="1" height="2" fill="#54ffff"/><rect x="257" y="596" width="1" height="9" fill="#54ffff"/><rect x="265" y="596" width="1" height="14" fill="#54ffff"/><rect x="274" y="596" width="1" height="16" fill="#54ffff"/><rect x="282" y="596" width="1" height="18" fill="#54ffff"/><rect x="290" y="596" width="1" height="14" fill="#54ffff"/><rect x="298" y="596" width="1" height="9" fill="#54ffff"/><rect x="306" y="596" width="1" height="2" fill="#54ffff"/><rect x="314" y="596" width="1" height="1" fill="#54ffff"/><rect x="323" y="596" width="1" height="1" fill="#54ffff"/><rect x="331" y="593" width="1" height="2" fill="#ff4040"/><rect x="339" y="591" width="1" height="4" fill="#ff4040"/><rect x="347" y="587" width="1" height="8" fill="#ff4040"/><rect x="355" y="589" width="1" height="6" fill="#ff4040"/><rect x="364" y="589" width="1" height="6" fill="#ff4040"/><rect x="372" y="590" width="1" height="5" fill="#ff4040"/><rect x="380" y="590" width="1" height="5" fill="#ff4040"/><rect x="388" y="587" width="1" height="8" fill="#ff4040"/><rect x="396" y="583" width="1" height="12" fill="#ff4040"/><rect x="404" y="581" width="1" height="14" fill="#ff4040"/><rect x="413" y="567" width="1" height="28" fill="#ff4040"/><rect x="421" y="550" width="1" height="45" fill="#ff4040"/><rect x="429" y="535" width="1" height="60" fill="#ff4040"/><rect x="437" y="530" width="1" height="65" fill="#ff4040"/><rect x="445" y="537" width="1" height="58" fill="#ff4040"/><rect x="454" y="540" width="1" height="55" fill="#ff4040"/><rect x="462" y="548" width="1" height="47" fill="#ff4040"/><rect x="470" y="550" width="1" height="45" fill="#ff4040"/><rect x="478" y="555" width="1" height="40" fill="#ff4040"/><rect x="486" y="563" width="1" height="32" fill="#ff4040"/><rect x="494" y="566" width="1" height="29" fill="#ff4040"/><rect x="503" y="557" width="1" height="38" fill="#ff4040"/><rect x="511" y="553" width="1" height="42" fill="#ff4040"/><rect x="519" y="543" width="1" height="52" fill="#ff4040"/><rect x="527" y="525" width="1" height="70" fill="#ff4040"/><rect x="535" y="514" width="1" height="81" fill="#ff4040"/><rect x="544" y="509" width="1" height="86" fill="#ff4040"/><rect x="552" y="527" width="1" height="68" fill="#ff4040"/><rect x="560" y="538" width="1" height="57" fill="#ff4040"/><rect x="568" y="533" width="1" height="62" fill="#ff4040"/><rect x="576" y="528" width="1" height="67" fill="#ff4040"/><rect x="584" y="519" width="1" height="76" fill="#ff4040"/><rect x="593" y="514" width="1" height="81" fill="#ff4040"/><rect x="601" y="512" width="1" height="83" fill="#ff4040"/><rect x="609" y="488" width="1" height="107" fill="#ff4040"/><rect x="617" y="483" width="1" height="112" fill="#ff4040"/><rect x="625" y="474" width="1" height="121" fill="#ff4040"/><rect x="634" y="500" width="1" height="95" fill="#ff4040"/><rect x="642" y="520" width="1" height="75" fill="#ff4040"/><rect x="650" y="540" width="1" height="55" fill="#ff4040"/><rect x="658" y="557" width="1" height="38" fill="#ff4040"/><rect x="666" y="579" width="1" height="16" fill="#ff4040"/><rect x="674" y="592" width="1" height="3" fill="#ff4040"/><rect x="683" y="590" width="1" height="5" fill="#ff4040"/><rect x="691" y="578" width="1" height="17" fill="#ff4040"/><rect x="699" y="566" width="1" height="29" fill="#ff4040"/><rect x="707" y="575" width="1" height="20" fill="#ff4040"/><rect x="715" y="586" width="1" height="9" fill="#ff4040"/><rect x="724" y="592" width="1" height="3" fill="#ff4040"/><rect x="732" y="581" width="1" height="14" fill="#ff4040"/><rect x="740" y="571" width="1" height="24" fill="#ff4040"/><rect x="748" y="573" width="1" height="22" fill="#ff4040"/><rect x="756" y="582" width="1" height="13" fill="#ff4040"/><rect x="764" y="585" width="1" height="10" fill="#ff4040"/><rect x="773" y="592" width="1" height="3" fill="#ff4040"/><rect x="781" y="596" width="1" height="1" fill="#54ffff"/><rect x="789" y="596" width="1" height="13" fill="#54ffff"/><rect x="797" y="596" width="1" height="18" fill="#54ffff"/><rect x="805" y="596" width="1" height="24" fill="#54ffff"/><rect x="814" y="596" width="1" height="20" fill="#54ffff"/><rect x="822" y="596" width="1" height="18" fill="#54ffff"/><rect x="830" y="596" width="1" height="11" fill="#54ffff"/><rect x="838" y="596" width="1" height="12" fill="#54ffff"/><rect x="846" y="596" width="1" height="10" fill="#54ffff"/><rect x="854" y="596" width="1" height="17" fill="#54ffff"/><rect x="863" y="596" width="1" height="20" fill="#54ffff"/><rect x="871" y="596" width="1" height="20" fill="#54ffff"/><rect x="879" y="596" width="1" height="16" fill="#54ffff"/><rect x="887" y="596" width="1" height="13" fill="#54ffff"/><rect x="895" y="596" width="1" height="12" fill="#54ffff"/><rect x="903" y="596" width="1" height="8" fill="#54ffff"/><rect x="912" y="591" width="1" height="4" fill="#ff4040"/><rect x="920" y="580" width="1" height="15" fill="#ff4040"/><rect x="928" y="570" width="1" height="25" fill="#ff4040"/><rect x="936" y="577" width="1" height="18" fill="#ff4040"/><rect x="944" y="585" width="1" height="10" fill="#ff4040"/><rect x="953" y="596" width="1" height="4" fill="#54ffff"/><rect x="961" y="596" width="1" height="15" fill="#54ffff"/><rect x="969" y="596" width="1" height="23" fill="#54ffff"/><rect x="977" y="596" width="1" height="25" fill="#54ffff"/><rect x="985" y="596" width="1" height="22" fill="#54ffff"/><rect x="993" y="596" width="1" height="12" fill="#54ffff"/><rect x="1002" y="596" width="1" height="2" fill="#54ffff"/><rect x="1010" y="587" width="1" height="8" fill="#ff4040"/><rect x="1018" y="571" width="1" height="24" fill="#ff4040"/><rect x="1026" y="566" width="1" height="29" fill="#ff4040"/><rect x="1034" y="560" width="1" height="35" fill="#ff4040"/><rect x="1043" y="543" width="1" height="52" fill="#ff4040"/><rect x="1051" y="532" width="1" height="63" fill="#ff4040"/><rect x="1059" y="523" width="1" height="72" fill="#ff4040"/><rect x="1067" y="530" width="1" height="65" fill="#ff4040"/><rect x="1075" y="537" width="1" height="58" fill="#ff4040"/><rect x="1083" y="548" width="1" height="47" fill="#ff4040"/><rect x="1092" y="564" width="1" height="31" fill="#ff4040"/><rect x="1100" y="584" width="1" height="11" fill="#ff4040"/><rect x="1108" y="596" width="1" height="1" fill="#54ffff"/><rect x="1116" y="596" width="1" height="4" fill="#54ffff"/><rect x="1124" y="596" width="1" height="5" fill="#54ffff"/></g><polyline points="4.5,564.5 12.5,564.5 20.5,564.5 28.5,564.5 36.5,564.5 44.5,564.5 53.5,564.5 61.5,594.5 69.5,594.5 77.5,594.5 85.5,594.5 94.5,594.5 102.5,594.5 110.5,594.5 118.5,594.5 126.5,594.5 134.5,594.5 143.5,594.5 151.5,594.5 159.5,594.5 167.5,594.5 175.5,594.5 184.5,594.5 192.5,594.5 200.5,594.5 208.5,594.5 216.5,594.5 224.5,594.5 233.5,594.5 241.5,594.5 249.5,564.5 257.5,564.5 265.5,564.5 274.5,564.5 282.5,564.5 290.5,564.5 298.5,564.5 306.5,564.5 314.5,564.5 323.5,564.5 331.5,594.5 339.5,594.5 347.5,594.5 355.5,594.5 364.5,594.5 372.5,594.5 380.5,594.5 388.5,594.5 396.5,594.5 404.5,594.5 413.5,594.5 421.5,594.5 429.5,594.5 437.5,594.5 445.5,594.5 454.5,594.5 462.5,594.5 470.5,594.5 478.5,594.5 486.5,594.5 494.5,594.5 503.5,594.5 511.5,594.5 519.5,594.5 527.5,594.5 535.5,594.5 544.5,594.5 552.5,594.5 560.5,594.5 568.5,594.5 576.5,594.5 584.5,594.5 593.5,594.5 601.5,594.5 609.5,594.5 617.5,594.5 625.5,594.5 634.5,594.5 642.5,594.5 650.5,594.5 658.5,594.5 666.5,594.5 674.5,594.5 683.5,594.5 691.5,594.5 699.5,594.5 707.5,594.5 715.5,594.5 724.5,594.5 732.5,594.5 740.5,594.5 748.5,594.5 756.5,594.5 764.5,594.5 773.5,594.5 781.5,564.5 789.5,564.5 797.5,564.5 805.5,564.5 814.5,564.5 822.5,564.5 830.5,564.5 838.5,564.5 846.5,564.5 854.5,564.5 863.5,564.5 871.5,564.5 879.5,564.5 887.5,564.5 895.5,564.5 903.5,564.5 912.5,594.5 920.5,594.5 928.5,594.5 936.5,594.5 944.5,594.5 953.5,564.5 961.5,564.5 969.5,564.5 977.5,564.5 985.5,564.5 993.5,564.5 1002.5,564.5 1010.5,594.5 1018.5,594.5 1026.5,594.5 1034.5,594.5 1043.5,594.5 1051.5,594.5 1059.5,594.5 1067.5,594.5 1075.5,594.5 1083.5,594.5 1092.5,594.5 1100.5,594.5 1108.5,564.5 1116.5,564.5 1124.5,564.5 1130,564.5" fill="none" stroke="#00ffff" stroke-width="1" shape-rendering="crispEdges"/><g shape-rendering="crispEdges"><rect x="3" y="594" width="1127" height="2" fill="#c8c8c8"/><rect x="453" y="487" width="3" height="109" fill="#ff96c8"/><rect x="526" y="487" width="3" height="109" fill="#ff96c8"/><rect x="567" y="487" width="3" height="109" fill="#ff96c8"/></g><g shape-rendering="crispEdges" fill="#ff00ff"><rect x="3" y="595" width="3" height="1"/><rect x="11" y="595" width="3" height="1"/><rect x="19" y="595" width="3" height="1"/><rect x="853" y="595" width="3" height="1"/><rect x="862" y="595" width="3" height="1"/><rect x="870" y="595" width="3" height="1"/><rect x="878" y="595" width="3" height="1"/><rect x="886" y="595" width="3" height="1"/><rect x="894" y="595" width="3" height="1"/><rect x="902" y="595" width="3" height="1"/><rect x="911" y="595" width="3" height="1"/><rect x="919" y="595" width="3" height="1"/><rect x="927" y="595" width="3" height="1"/><rect x="935" y="595" width="3" height="1"/><rect x="943" y="595" width="3" height="1"/><rect x="952" y="595" width="3" height="1"/><rect x="960" y="595" width="3" height="1"/><rect x="968" y="595" width="3" height="1"/><rect x="976" y="595" width="3" height="1"/><rect x="984" y="595" width="3" height="1"/><rect x="992" y="595" width="3" height="1"/><rect x="1001" y="595" width="3" height="1"/><rect x="1009" y="595" width="3" height="1"/><rect x="1017" y="595" width="3" height="1"/><rect x="1025" y="595" width="3" height="1"/><rect x="1033" y="595" width="3" height="1"/><rect x="1042" y="595" width="3" height="1"/><rect x="1050" y="595" width="3" height="1"/><rect x="1058" y="595" width="3" height="1"/><rect x="1066" y="595" width="3" height="1"/><rect x="1074" y="595" width="3" height="1"/><rect x="1082" y="595" width="3" height="1"/><rect x="1091" y="595" width="3" height="1"/></g><polyline points="4.5,562.5 12.5,556.0 20.5,547.5 28.5,535.0 36.5,525.5 44.5,520.5 53.5,511.0 61.5,492.5 69.5,486.0 77.5,478.8 85.5,482.5 94.5,472.5 102.5,472.5 110.5,473.8 118.5,472.5 126.5,475.0 134.5,473.8 143.5,468.8 151.5,462.5 159.5,461.2 167.5,458.0 175.5,461.2 184.5,472.5 192.5,475.5 200.5,473.8 208.5,473.8 216.5,481.2 224.5,502.5 233.5,527.5 241.5,545.0 249.5,563.8 257.5,572.5 265.5,577.5 274.5,580.0 282.5,580.5 290.5,572.5 298.5,561.2 306.5,560.0 314.5,530.0 323.5,510.0 331.5,488.8 339.5,482.5 347.5,470.0 355.5,473.2 364.5,473.0 372.5,470.0 380.5,467.0 388.5,470.0 396.5,466.2 404.5,466.2 413.5,465.0 421.5,460.0 429.5,460.0 437.5,456.2 445.5,461.2 454.5,461.2 462.5,461.2 470.5,461.8 478.5,463.8 486.5,480.8 494.5,477.5 503.5,477.5 511.5,489.5 519.5,481.2 527.5,477.5 535.5,483.2 544.5,482.2 552.5,484.0 560.5,486.2 568.5,477.5 576.5,476.2 584.5,473.0 593.5,470.8 601.5,472.0 609.5,463.2 617.5,470.0 625.5,475.0 634.5,485.0 642.5,495.0 650.5,505.0 658.5,523.8 666.5,543.8 674.5,555.0 683.5,548.8 691.5,542.5 699.5,523.8 707.5,525.0 715.5,536.2 724.5,521.2 732.5,502.5 740.5,497.5 748.5,497.5 756.5,495.0 764.5,493.2 773.5,505.0 781.5,510.0 789.5,530.0 797.5,545.0 805.5,555.8 814.5,553.2 822.5,555.5 830.5,545.0 838.5,543.8 846.5,545.0 854.5,546.2 863.5,549.5 871.5,546.8 879.5,540.0 887.5,540.8 895.5,535.0 903.5,523.8 912.5,503.8 920.5,492.5 928.5,485.0 936.5,493.8 944.5,505.0 953.5,526.2 961.5,544.0 969.5,557.0 977.5,564.0 985.5,571.0 993.5,572.5 1002.5,548.0 1010.5,517.5 1018.5,506.2 1026.5,490.0 1034.5,473.5 1043.5,469.8 1051.5,466.8 1059.5,464.3 1067.5,467.6 1075.5,471.0 1083.5,472.9 1092.5,490.0 1100.5,522.0 1108.5,546.0 1116.5,560.0 1124.5,565.0 1130,568.5" fill="none" stroke="#ffffff" stroke-width="1" shape-rendering="crispEdges" stroke-linejoin="round"/><polyline points="4.5,556.2 12.5,557.5 20.5,553.8 28.5,546.2 36.5,540.0 44.5,533.8 53.5,525.5 61.5,514.0 69.5,504.0 77.5,495.0 85.5,490.0 94.5,484.5 102.5,481.2 110.5,479.2 118.5,477.5 126.5,476.2 134.5,474.5 143.5,472.0 151.5,468.8 159.5,466.2 167.5,463.8 175.5,463.0 184.5,466.2 192.5,469.2 200.5,470.8 208.5,472.0 216.5,475.0 224.5,483.8 233.5,497.5 241.5,512.5 249.5,527.5 257.5,540.0 265.5,551.2 274.5,561.0 282.5,566.0 290.5,568.0 298.5,566.2 306.5,563.8 314.5,553.8 323.5,538.5 331.5,520.5 339.5,507.0 347.5,493.8 355.5,486.2 364.5,481.2 372.5,477.5 380.5,473.8 388.5,472.5 396.5,470.0 404.5,469.2 413.5,467.5 421.5,464.5 429.5,462.5 437.5,461.2 445.5,461.2 454.5,461.2 462.5,461.2 470.5,461.2 478.5,462.5 486.5,468.0 494.5,471.2 503.5,473.0 511.5,477.0 519.5,478.8 527.5,478.2 535.5,480.8 544.5,481.5 552.5,483.4 560.5,486.2 568.5,483.8 576.5,481.2 584.5,478.0 593.5,475.8 601.5,474.5 609.5,471.2 617.5,470.8 625.5,471.2 634.5,475.8 642.5,482.5 650.5,491.2 658.5,502.5 666.5,516.2 674.5,528.8 683.5,535.0 691.5,538.2 699.5,533.8 707.5,530.5 715.5,532.5 724.5,529.2 732.5,520.0 740.5,512.5 748.5,507.5 756.5,503.2 764.5,500.0 773.5,501.8 781.5,504.5 789.5,513.8 797.5,525.0 805.5,535.5 814.5,541.2 822.5,546.5 830.5,545.8 838.5,545.0 846.5,545.0 854.5,545.5 863.5,546.8 871.5,547.0 879.5,544.5 887.5,543.2 895.5,540.8 903.5,535.0 912.5,524.5 920.5,513.8 928.5,503.8 936.5,500.0 944.5,502.0 953.5,510.0 961.5,522.0 969.5,535.0 977.5,546.2 985.5,554.8 993.5,559.5 1002.5,552.0 1010.5,540.0 1018.5,530.0 1026.5,516.2 1034.5,501.2 1043.5,490.6 1051.5,482.4 1059.5,477.0 1067.5,474.0 1075.5,472.8 1083.5,472.8 1092.5,479.3 1100.5,495.5 1108.5,514.0 1116.5,530.0 1124.5,541.6 1130,549.7" fill="none" stroke="#ffff00" stroke-width="1" shape-rendering="crispEdges" stroke-linejoin="round"/><polyline points="4.5,578.8 12.5,561.2 20.5,541.0 28.5,517.5 36.5,494.5 44.5,493.0 53.5,483.8 61.5,448.2 69.5,448.2 77.5,442.5 85.5,461.2 94.5,444.2 102.5,455.0 110.5,465.8 118.5,464.5 126.5,473.0 134.5,468.8 143.5,458.0 151.5,447.5 159.5,452.5 167.5,446.2 175.5,462.0 184.5,487.5 192.5,487.5 200.5,479.5 208.5,478.2 216.5,488.8 224.5,527.0 233.5,575.0 241.5,608.8 249.5,620.0 257.5,622.0 265.5,620.0 274.5,617.0 282.5,609.0 290.5,582.5 298.5,553.8 306.5,552.5 314.5,490.0 323.5,455.0 331.5,421.2 339.5,430.0 347.5,418.8 355.5,440.0 364.5,452.0 372.5,452.0 380.5,450.0 388.5,463.8 396.5,456.2 404.5,460.0 413.5,460.8 421.5,447.5 429.5,455.0 437.5,447.5 445.5,463.8 454.5,461.2 462.5,461.2 470.5,461.8 478.5,467.5 486.5,505.0 494.5,488.0 503.5,485.0 511.5,508.8 519.5,487.5 527.5,477.0 535.5,485.8 544.5,482.3 552.5,493.0 560.5,503.8 568.5,464.5 576.5,468.0 584.5,463.0 593.5,460.5 601.5,471.2 609.5,448.2 617.5,468.8 625.5,477.0 634.5,501.2 642.5,518.8 650.5,537.5 658.5,566.0 666.5,598.8 674.5,608.0 683.5,575.0 691.5,550.0 699.5,506.2 707.5,511.2 715.5,545.0 724.5,510.0 732.5,463.2 740.5,466.2 748.5,479.2 756.5,479.2 764.5,479.2 773.5,509.2 781.5,520.0 789.5,560.0 797.5,587.5 805.5,598.8 814.5,580.0 822.5,575.5 830.5,542.0 838.5,540.0 846.5,543.0 854.5,546.2 863.5,555.8 871.5,547.5 879.5,532.5 887.5,537.0 895.5,530.0 903.5,502.5 912.5,460.0 920.5,448.8 928.5,447.5 936.5,473.8 944.5,505.0 953.5,557.5 961.5,595.0 969.5,607.5 977.5,609.0 985.5,609.0 993.5,580.0 1002.5,532.0 1010.5,463.8 1018.5,457.5 1026.5,432.5 1034.5,416.3 1043.5,429.0 1051.5,436.2 1059.5,437.3 1067.5,458.0 1075.5,469.0 1083.5,473.3 1092.5,512.0 1100.5,570.0 1108.5,610.0 1116.5,622.0 1124.5,627.0 1130,630.5" fill="none" stroke="#ff00ff" stroke-width="1" shape-rendering="crispEdges" stroke-linejoin="round"/><g shape-rendering="crispEdges"><rect x="287" y="580" width="7" height="16" fill="#0000ff"/><rect x="680" y="580" width="7" height="16" fill="#0000ff"/><rect x="990" y="580" width="7" height="16" fill="#0000ff"/></g><g shape-rendering="crispEdges"><rect x="19" y="441" width="3" height="155" fill="#fff"/><rect x="297" y="441" width="3" height="155" fill="#fff"/><rect x="829" y="441" width="3" height="155" fill="#fff"/><rect x="878" y="441" width="3" height="155" fill="#fff"/><rect x="1001" y="441" width="3" height="155" fill="#fff"/><rect x="84" y="441" width="3" height="20" fill="#0000ff"/><rect x="109" y="441" width="3" height="20" fill="#0000ff"/><rect x="174" y="441" width="3" height="20" fill="#0000ff"/><rect x="387" y="441" width="3" height="20" fill="#0000ff"/><rect x="403" y="441" width="3" height="20" fill="#0000ff"/><rect x="444" y="441" width="3" height="20" fill="#0000ff"/><rect x="616" y="441" width="3" height="20" fill="#0000ff"/><rect x="935" y="441" width="3" height="20" fill="#0000ff"/><rect x="1074" y="441" width="3" height="20" fill="#0000ff"/></g><path d="M20.8 443 L25.5 449 L22.0 449 L22.0 455 L19.0 455 L19.0 449 L15.5 449 Z" fill="#ff0000"/><rect x="20.0" y="444" width="2" height="1" fill="#fff" shape-rendering="crispEdges"/><rect x="24.0" y="444" width="3" height="1" fill="#fff" shape-rendering="crispEdges"/><text x="27.99" y="449.3" font-size="12" fill="#fff" stroke="#fff" stroke-width="0.25" textLength="24.4" lengthAdjust="spacing">全仓</text><path d="M298.8 443 L303.5 449 L300.0 449 L300.0 455 L297.0 455 L297.0 449 L293.5 449 Z" fill="#ff0000"/><rect x="298.0" y="444" width="2" height="1" fill="#fff" shape-rendering="crispEdges"/><rect x="302.0" y="444" width="3" height="1" fill="#fff" shape-rendering="crispEdges"/><text x="305.99" y="449.3" font-size="12" fill="#fff" stroke="#fff" stroke-width="0.25" textLength="24.4" lengthAdjust="spacing">全仓</text><path d="M830.8 443 L835.5 449 L832.0 449 L832.0 455 L829.0 455 L829.0 449 L825.5 449 Z" fill="#ff0000"/><rect x="830.0" y="444" width="2" height="1" fill="#fff" shape-rendering="crispEdges"/><rect x="834.0" y="444" width="3" height="1" fill="#fff" shape-rendering="crispEdges"/><text x="837.99" y="449.3" font-size="12" fill="#fff" stroke="#fff" stroke-width="0.25" textLength="24.4" lengthAdjust="spacing">全仓</text><path d="M879.8 443 L884.5 449 L881.0 449 L881.0 455 L878.0 455 L878.0 449 L874.5 449 Z" fill="#ff0000"/><rect x="879.0" y="444" width="2" height="1" fill="#fff" shape-rendering="crispEdges"/><rect x="883.0" y="444" width="3" height="1" fill="#fff" shape-rendering="crispEdges"/><text x="886.99" y="449.3" font-size="12" fill="#fff" stroke="#fff" stroke-width="0.25" textLength="24.4" lengthAdjust="spacing">全仓</text><path d="M1002.8 443 L1007.5 449 L1004.0 449 L1004.0 455 L1001.0 455 L1001.0 449 L997.5 449 Z" fill="#ff0000"/><rect x="1002.0" y="444" width="2" height="1" fill="#fff" shape-rendering="crispEdges"/><rect x="1006.0" y="444" width="3" height="1" fill="#fff" shape-rendering="crispEdges"/><text x="1009.99" y="449.3" font-size="12" fill="#fff" stroke="#fff" stroke-width="0.25" textLength="24.4" lengthAdjust="spacing">全仓</text><circle cx="89.0" cy="435" r="1.8" fill="none" stroke="#fff" stroke-width="1"/><text x="96.44" y="439.27" font-size="12" fill="#fff" stroke="#fff" stroke-width="0.25">逃</text><circle cx="114.0" cy="435" r="1.8" fill="none" stroke="#fff" stroke-width="1"/><text x="121.44" y="439.27" font-size="12" fill="#fff" stroke="#fff" stroke-width="0.25">逃</text><circle cx="179.0" cy="435" r="1.8" fill="none" stroke="#fff" stroke-width="1"/><text x="186.44" y="439.27" font-size="12" fill="#fff" stroke="#fff" stroke-width="0.25">逃</text><circle cx="392.0" cy="435" r="1.8" fill="none" stroke="#fff" stroke-width="1"/><text x="399.44" y="439.27" font-size="12" fill="#fff" stroke="#fff" stroke-width="0.25">逃</text><text x="415.44" y="439.27" font-size="12" fill="#fff" stroke="#fff" stroke-width="0.25">逃</text><circle cx="449.0" cy="435" r="1.8" fill="none" stroke="#fff" stroke-width="1"/><text x="456.44" y="439.27" font-size="12" fill="#fff" stroke="#fff" stroke-width="0.25">逃</text><circle cx="621.0" cy="435" r="1.8" fill="none" stroke="#fff" stroke-width="1"/><text x="628.44" y="439.27" font-size="12" fill="#fff" stroke="#fff" stroke-width="0.25">逃</text><circle cx="940.0" cy="435" r="1.8" fill="none" stroke="#fff" stroke-width="1"/><text x="947.44" y="439.27" font-size="12" fill="#fff" stroke="#fff" stroke-width="0.25">逃</text><circle cx="1079.0" cy="435" r="1.8" fill="none" stroke="#fff" stroke-width="1"/><text x="1086.44" y="439.27" font-size="12" fill="#fff" stroke="#fff" stroke-width="0.25">逃</text><rect x="454" y="497" width="3" height="1" fill="#fff" shape-rendering="crispEdges"/><rect x="458" y="497" width="3" height="1" fill="#fff" shape-rendering="crispEdges"/><text x="461.76" y="502.22" font-size="12" fill="#fff" stroke="#fff" stroke-width="0.25">短买</text><rect x="527" y="497" width="3" height="1" fill="#fff" shape-rendering="crispEdges"/><rect x="531" y="497" width="3" height="1" fill="#fff" shape-rendering="crispEdges"/><text x="534.76" y="502.22" font-size="12" fill="#fff" stroke="#fff" stroke-width="0.25">短买</text><rect x="568" y="497" width="3" height="1" fill="#fff" shape-rendering="crispEdges"/><rect x="572" y="497" width="3" height="1" fill="#fff" shape-rendering="crispEdges"/><text x="575.76" y="502.22" font-size="12" fill="#fff" stroke="#fff" stroke-width="0.25">短买</text><circle cx="294.0" cy="602" r="1.8" fill="none" stroke="#fff" stroke-width="1"/><text x="302.24" y="606.21" font-size="12" fill="#fff" stroke="#fff" stroke-width="0.25">低吸</text><circle cx="687.0" cy="602" r="1.8" fill="none" stroke="#fff" stroke-width="1"/><text x="695.24" y="606.21" font-size="12" fill="#fff" stroke="#fff" stroke-width="0.25">低吸</text><circle cx="997.0" cy="602" r="1.8" fill="none" stroke="#fff" stroke-width="1"/><text x="1005.24" y="606.21" font-size="12" fill="#fff" stroke="#fff" stroke-width="0.25">低吸</text><rect x="0" y="630" width="1130" height="20" fill="#000"/><g shape-rendering="crispEdges" fill="#b80000"><rect x="0" y="630" width="1130" height="1"/><rect x="0" y="646" width="1130" height="1"/><rect x="0" y="646" width="1" height="4"/><rect x="165" y="630" width="1" height="16"/><rect x="330" y="630" width="1" height="16"/><rect x="518" y="630" width="1" height="16"/><rect x="690" y="630" width="1" height="16"/><rect x="870" y="630" width="1" height="16"/><rect x="207" y="631" width="1" height="2"/><rect x="248" y="631" width="1" height="2"/><rect x="289" y="631" width="1" height="2"/><rect x="377" y="631" width="1" height="2"/><rect x="424" y="631" width="1" height="2"/><rect x="471" y="631" width="1" height="2"/><rect x="561" y="631" width="1" height="2"/><rect x="604" y="631" width="1" height="2"/><rect x="647" y="631" width="1" height="2"/><rect x="735" y="631" width="1" height="2"/><rect x="780" y="631" width="1" height="2"/><rect x="825" y="631" width="1" height="2"/><rect x="905" y="631" width="1" height="2"/><rect x="940" y="631" width="1" height="2"/><rect x="973" y="631" width="1" height="2"/><rect x="42" y="647" width="1" height="3"/><rect x="97" y="647" width="1" height="3"/><rect x="130" y="647" width="1" height="3"/><rect x="171" y="647" width="1" height="3"/><rect x="200" y="647" width="1" height="3"/><rect x="233" y="647" width="1" height="3"/><rect x="262" y="647" width="1" height="3"/><rect x="297" y="647" width="1" height="3"/><rect x="338" y="647" width="1" height="3"/><rect x="364" y="647" width="1" height="3"/><rect x="388" y="647" width="1" height="3"/><rect x="417" y="647" width="1" height="3"/><rect x="446" y="647" width="1" height="3"/><rect x="477" y="647" width="1" height="3"/><rect x="506" y="647" width="1" height="3"/><rect x="536" y="647" width="1" height="3"/><rect x="565" y="647" width="1" height="3"/><rect x="592" y="647" width="1" height="3"/><rect x="624" y="647" width="1" height="3"/><rect x="655" y="647" width="1" height="3"/><rect x="684" y="647" width="1" height="3"/><rect x="719" y="647" width="1" height="3"/><rect x="752" y="647" width="1" height="3"/><rect x="786" y="647" width="1" height="3"/><rect x="815" y="647" width="1" height="3"/><rect x="821" y="647" width="1" height="3"/><rect x="864" y="647" width="1" height="3"/><rect x="895" y="647" width="1" height="3"/><rect x="927" y="647" width="1" height="3"/></g><text transform="translate(4.40 642.80) scale(1.02 1)" font-size="12" fill="#ff3232" xml:space="preserve">2025</text><text x="31.03" y="643.5" font-size="12" fill="#ff3232">年</text><text transform="translate(167.4 642.8) scale(0.88 1)" font-size="12" fill="#ff3232">6</text><text transform="translate(331.9 642.8) scale(0.88 1)" font-size="12" fill="#ff3232">7</text><text transform="translate(519.4 642.8) scale(0.88 1)" font-size="12" fill="#ff3232">8</text><text transform="translate(691.4 642.8) scale(0.88 1)" font-size="12" fill="#ff3232">9</text><text transform="translate(871.4 642.8) scale(0.88 1)" font-size="12" fill="#ff3232">10</text><g shape-rendering="crispEdges"><rect x="9" y="648" width="1" height="2" fill="#c8c8c8"/><rect x="14" y="648" width="1" height="2" fill="#c8c8c8"/><rect x="20" y="648" width="1" height="2" fill="#c8c8c8"/><rect x="49" y="648" width="1" height="2" fill="#c8c800"/><rect x="54" y="648" width="1" height="2" fill="#c8c800"/><rect x="59" y="648" width="1" height="2" fill="#c8c800"/><rect x="86" y="649" width="1" height="1" fill="#c8c800"/><rect x="107" y="649" width="1" height="1" fill="#c8c8c8"/><rect x="900" y="649" width="20" height="1" fill="#00b4b4"/></g><rect x="984" y="600" width="146" height="50" fill="#000"/><text x="1017.71" y="621.27" font-size="18.3" font-weight="bold" fill="#fff" textLength="90.7" lengthAdjust="spacing">股朋指标网</text><text x="991" y="639.2" font-size="16.5" fill="#f4f0f0" stroke="#f4f0f0" stroke-width="0.35" textLength="131.5" lengthAdjust="spacing">www.7gpzb.com</text></svg></body></html>
